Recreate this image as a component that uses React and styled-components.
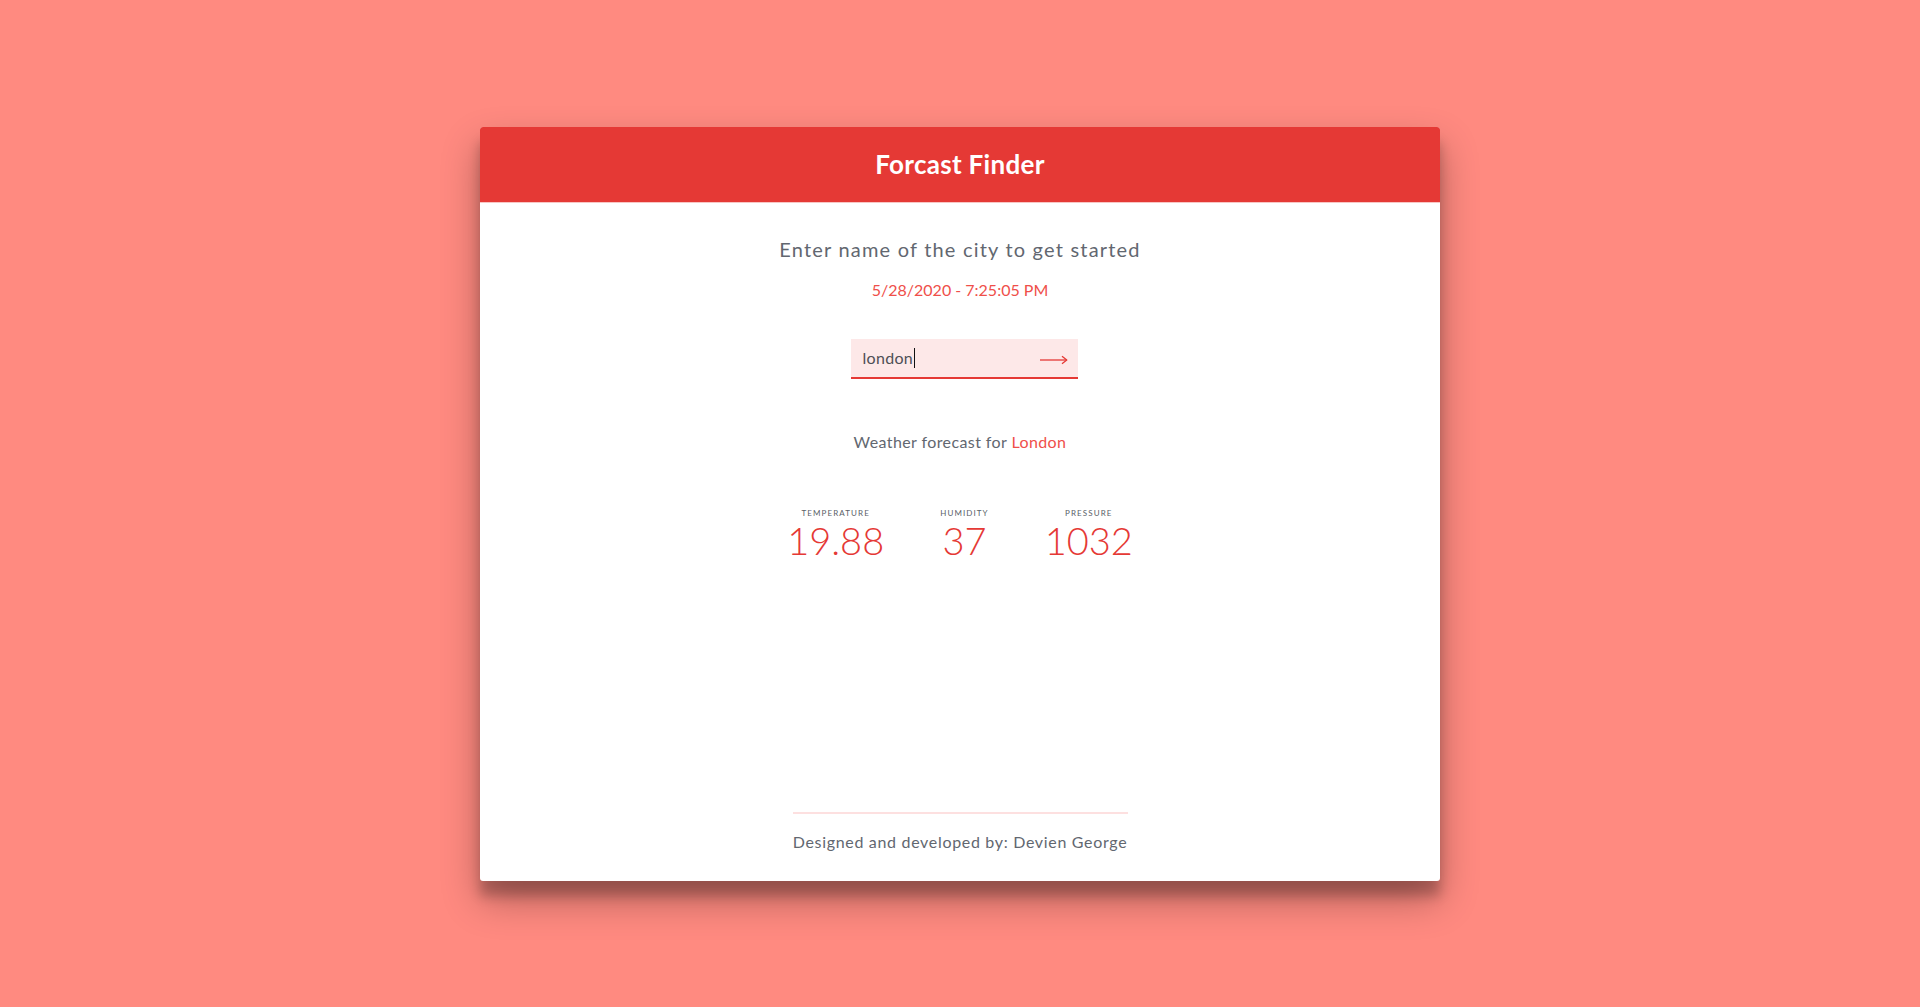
import React from "react";
import styled, { createGlobalStyle } from "styled-components";

const GlobalStyle = createGlobalStyle`
  html, body {
    margin: 0;
    padding: 0;
  }
  body {
    background: #ff8a80;
    font-family: Lato, "Open Sans", sans-serif;
  }
`;

const Page = styled.div`
  min-height: 100vh;
  display: flex;
  align-items: center;
  justify-content: center;
`;

const Card = styled.div`
  width: 960px;
  height: 754px;
  background: #fff;
  border-radius: 3px;
  display: flex;
  flex-direction: column;
  overflow: hidden;
  box-shadow: 0 19px 38px rgba(0, 0, 0, 0.3), 0 15px 12px rgba(0, 0, 0, 0.22);
`;

const Header = styled.header`
  height: 76px;
  background: #e53935;
  display: flex;
  align-items: center;
  justify-content: center;
  border-bottom: 1px solid #f8c6c4;
  box-sizing: border-box;
`;

const Title = styled.h1`
  margin: 0;
  color: #fff;
  font-size: 26px;
  font-weight: 700;
  letter-spacing: 0.3px;
`;

const Body = styled.main`
  flex: 1;
  display: flex;
  flex-direction: column;
  align-items: center;
  padding-top: 34px;
  line-height: 1.2;
`;

const Lead = styled.p`
  margin: 0;
  font-size: 20px;
  color: #626770;
  letter-spacing: 1.2px;
`;

const Stamp = styled.p`
  margin: 19px 0 0;
  font-size: 16px;
  color: #ef4f4a;
`;

const Field = styled.div`
  margin: 40px 0 0 8px;
  width: 227px;
  height: 40px;
  box-sizing: border-box;
  background: #fde8e8;
  border-bottom: 2px solid #e53935;
  display: flex;
  align-items: center;
  justify-content: space-between;
  padding: 0 10px 0 12px;
`;

const Value = styled.span`
  font-size: 16px;
  color: #4d4f55;
  letter-spacing: 0.3px;
  display: flex;
  align-items: center;
`;

const Caret = styled.span`
  display: inline-block;
  width: 1px;
  height: 20px;
  background: #111;
  margin-left: 1px;
`;

const Go = styled.button`
  border: 0;
  background: none;
  padding: 0;
  margin-top: 4px;
  display: flex;
  cursor: pointer;
`;

const Place = styled.p`
  margin: 53px 0 0;
  font-size: 16px;
  color: #626770;
  letter-spacing: 0.4px;
`;

const City = styled.span`
  color: #ef4f4a;
`;

const Stats = styled.div`
  margin-top: 58px;
  display: flex;
  gap: 56px;
`;

const Stat = styled.div`
  display: flex;
  flex-direction: column;
  align-items: center;
`;

const StatLabel = styled.span`
  font-size: 8px;
  letter-spacing: 1.1px;
  color: #5a5f68;
  text-transform: uppercase;
`;

const StatValue = styled.span`
  font-size: 38px;
  font-weight: 300;
  color: #e53935;
`;

const Footer = styled.footer`
  margin-top: auto;
  width: 335px;
  border-top: 2px solid #fde0e0;
  padding: 18px 0 29px;
  text-align: center;
  font-size: 16px;
  line-height: 1.2;
  letter-spacing: 0.68px;
  color: #626770;
`;

const stats = [
  { label: "Temperature", value: "19.88" },
  { label: "Humidity", value: "37" },
  { label: "Pressure", value: "1032" },
];

export default function App() {
  return (
    <>
      <GlobalStyle />
      <Page>
        <Card>
          <Header>
            <Title>Forcast Finder</Title>
          </Header>
          <Body>
            <Lead>Enter name of the city to get started</Lead>
            <Stamp>5/28/2020 - 7:25:05 PM</Stamp>
            <Field>
              <Value>
                london
                <Caret />
              </Value>
              <Go aria-label="search">
                <svg width="28" height="10" viewBox="0 0 28 10" fill="none">
                  <path d="M0 5H26.5" stroke="#e53935" strokeWidth="1.3" />
                  <path
                    d="M22 1.2L26.8 5L22 8.8"
                    stroke="#e53935"
                    strokeWidth="1.3"
                    strokeLinejoin="round"
                  />
                </svg>
              </Go>
            </Field>
            <Place>
              Weather forecast for <City>London</City>
            </Place>
            <Stats>
              {stats.map((s) => (
                <Stat key={s.label}>
                  <StatLabel>{s.label}</StatLabel>
                  <StatValue>{s.value}</StatValue>
                </Stat>
              ))}
            </Stats>
            <Footer>Designed and developed by: Devien George</Footer>
          </Body>
        </Card>
      </Page>
    </>
  );
}
